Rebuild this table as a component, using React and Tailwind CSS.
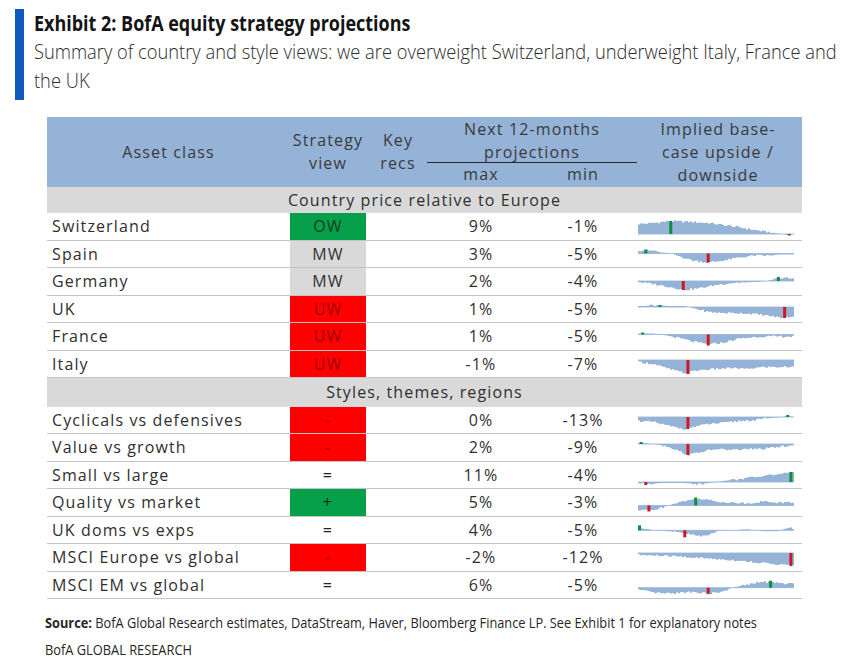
import React from "react";

const ROW_H = "h-[27.5px]";

// sparkline shapes: keypoints [t, v] (v > 0 above baseline), markers [t, v, colour]
const countries = [
  {
    name: "Switzerland", view: "OW", max: "9%", min: "-1%",
    base: 21,
    pts: [[0, 10], [0.1, 11], [0.2, 13], [0.35, 12], [0.45, 11], [0.6, 8], [0.75, 4], [0.88, 1], [0.93, 0], [0.95, -1], [1, 0]],
    marks: [[0.21, 13, "g"], [0.97, -1.5, "r"]],
  },
  {
    name: "Spain", view: "MW", max: "3%", min: "-5%",
    base: 12.5,
    pts: [[0, 3], [0.1, 3], [0.15, 1], [0.22, 0], [0.25, -2], [0.35, -7], [0.45, -9], [0.55, -7], [0.65, -4], [0.75, -2], [0.85, -2], [0.9, -1], [1, -1]],
    marks: [[0.05, 4, "g"], [0.45, -9, "r"]],
  },
  {
    name: "Germany", view: "MW", max: "2%", min: "-4%",
    base: 13,
    pts: [[0, -1], [0.1, -3], [0.2, -6], [0.3, -9], [0.4, -7], [0.5, -4], [0.6, -2], [0.75, -1], [0.83, 0], [0.88, 2], [0.95, 3], [1, 2]],
    marks: [[0.29, -9, "r"], [0.9, 4, "g"]],
  },
  {
    name: "UK", view: "UW", max: "1%", min: "-5%",
    base: 11,
    pts: [[0, 1], [0.05, 1], [0.1, 2], [0.2, 1], [0.3, 1], [0.35, -1], [0.45, -5], [0.55, -6], [0.65, -6], [0.75, -7], [0.85, -9], [0.93, -11], [1, -9]],
    marks: [[0.14, 2, "g"], [0.94, -11, "r"]],
  },
  {
    name: "France", view: "UW", max: "1%", min: "-5%",
    base: 11.5,
    pts: [[0, 1], [0.1, 1], [0.15, 0], [0.25, -3], [0.35, -7], [0.45, -10], [0.55, -8], [0.65, -4], [0.8, -2], [1, -2]],
    marks: [[0.03, 2, "g"], [0.45, -11, "r"]],
  },
  {
    name: "Italy", view: "UW", max: "-1%", min: "-7%",
    base: 9,
    pts: [[0, -2], [0.1, -4], [0.2, -9], [0.3, -13], [0.4, -10], [0.5, -9], [0.6, -8], [0.7, -9], [0.8, -7], [0.9, -7], [1, -7]],
    marks: [[0.32, -14, "r"]],
  },
];

const styles = [
  {
    name: "Cyclicals vs defensives", view: "-", max: "0%", min: "-13%",
    base: 10,
    pts: [[0, -4], [0.1, -5], [0.2, -9], [0.3, -12], [0.35, -10], [0.45, -7], [0.55, -6], [0.65, -4], [0.75, -3], [0.85, -1], [0.92, 0], [0.95, 1], [1, 0]],
    marks: [[0.32, -12, "r"], [0.96, 2, "g"]],
  },
  {
    name: "Value vs growth", view: "-", max: "2%", min: "-9%",
    base: 10,
    pts: [[0, 1], [0.05, 1], [0.1, 0], [0.18, -2], [0.25, -6], [0.32, -11], [0.4, -8], [0.5, -5], [0.6, -6], [0.7, -5], [0.8, -5], [0.9, -3], [1, -1]],
    marks: [[0.02, 2, "g"], [0.32, -11, "r"]],
  },
  {
    name: "Small vs large", view: "=", max: "11%", min: "-4%",
    base: 20,
    pts: [[0, -1], [0.05, -2], [0.15, -1], [0.3, -1], [0.4, -2], [0.45, -1], [0.5, 0], [0.6, 2], [0.7, 4], [0.8, 6], [0.9, 8], [1, 9]],
    marks: [[0.05, -3, "r"], [0.98, 10, "g"]],
  },
  {
    name: "Quality vs market", view: "+", max: "5%", min: "-3%",
    base: 16.5,
    pts: [[0, -5], [0.12, -4], [0.15, -2], [0.2, 0], [0.25, 3], [0.35, 6], [0.4, 7], [0.5, 4], [0.6, 3], [0.7, 2], [0.8, 4], [0.9, 3], [1, 3]],
    marks: [[0.07, -6, "r"], [0.37, 8, "g"]],
  },
  {
    name: "UK doms vs exps", view: "=", max: "4%", min: "-5%",
    base: 13.3,
    pts: [[0, 3], [0.04, 2], [0.1, 0], [0.2, -1], [0.3, -3], [0.4, -6], [0.45, -5], [0.5, -1], [0.6, 0], [0.7, 1], [0.8, -1], [0.9, -1], [0.95, 2], [1, 2]],
    marks: [[0.01, 5, "g"], [0.3, -7, "r"]],
  },
  {
    name: "MSCI Europe vs global", view: "-", max: "-2%", min: "-12%",
    base: 9,
    pts: [[0, -2], [0.2, -3], [0.4, -5], [0.6, -7], [0.8, -10], [0.95, -12], [1, -12]],
    marks: [[0.98, -13, "r"]],
  },
  {
    name: "MSCI EM vs global", view: "=", max: "6%", min: "-5%",
    base: 15.7,
    pts: [[0, -2], [0.1, -5], [0.2, -6], [0.35, -4], [0.45, -6], [0.55, -4], [0.6, 0], [0.7, 3], [0.8, 6], [0.88, 5], [0.95, 4], [1, 4]],
    marks: [[0.85, 7, "g"], [0.45, -6, "r"]],
  },
];

function interp(pts, t) {
  for (let i = 1; i < pts.length; i++) {
    if (t <= pts[i][0]) {
      const [t0, v0] = pts[i - 1];
      const [t1, v1] = pts[i];
      return v0 + ((v1 - v0) * (t - t0)) / (t1 - t0 || 1);
    }
  }
  return pts[pts.length - 1][1];
}

function Spark({ base, pts, marks, seed }) {
  const W = 156;
  const N = 78;
  const bw = W / N;
  let d = `M 0 ${base}`;
  for (let i = 0; i < N; i++) {
    const t = (i + 0.5) / N;
    let v = interp(pts, t);
    const r = Math.sin(i * 12.9898 + seed * 78.233) * 43758.5453;
    const f = r - Math.floor(r);
    if (Math.abs(v) > 1.5) v += (f - 0.5) * 1.8;
    const y = base - v;
    d += ` L ${(i * bw).toFixed(2)} ${y.toFixed(2)} L ${((i + 1) * bw).toFixed(2)} ${y.toFixed(2)}`;
  }
  d += ` L ${W} ${base} Z`;
  return (
    <svg width="160" height="27" viewBox="0 0 160 27" className="block ml-[4px]">
      <line x1="0" y1={base} x2={W} y2={base} stroke="#a9c0dd" strokeWidth="1" />
      <path d={d} fill="#95b3d7" />
      {marks.map(([t, v, c], i) => (
        <rect
          key={i}
          x={t * W - 1.5}
          y={v > 0 ? base - v : base}
          width="3"
          height={Math.abs(v)}
          fill={c === "g" ? "#0c8f3e" : "#d01820"}
        />
      ))}
    </svg>
  );
}

function ViewCell({ view }) {
  if (view === "OW") return <div className="w-[76px] h-full flex items-center justify-center bg-[#06a04a] text-[#123d20]">OW</div>;
  if (view === "MW") return <div className="w-[76px] h-full flex items-center justify-center bg-[#d9d9d9] text-[#333]">MW</div>;
  if (view === "UW") return <div className="w-[76px] h-full flex items-center justify-center bg-[#ff0000] text-[#9e0000]">UW</div>;
  if (view === "-") return <div className="w-[76px] h-full flex items-center justify-center bg-[#ff0000] text-[#a30000]">-</div>;
  if (view === "+") return <div className="w-[76px] h-full flex items-center justify-center bg-[#06a04a] text-[#0d2d14]">+</div>;
  return <div className="w-[76px] h-full flex items-center justify-center text-[#222]">=</div>;
}

function Row({ r, seed }) {
  return (
    <div className={`flex ${ROW_H} border-b border-[#c4c4c4] box-border`}>
      <div className="w-[243px] flex items-center pl-[5px]">{r.name}</div>
      <ViewCell view={r.view} />
      <div className="w-[64px]" />
      <div className="w-[102px] flex items-center justify-center">{r.max}</div>
      <div className="w-[102px] flex items-center justify-center">{r.min}</div>
      <div className="w-[168px] overflow-hidden">
        <Spark base={r.base} pts={r.pts} marks={r.marks} seed={seed} />
      </div>
    </div>
  );
}

export default function App() {
  return (
    <div className="w-[850px] h-[660px] bg-white overflow-hidden font-['Open_Sans',sans-serif]">
      {/* heading */}
      <div className="flex pt-[9px] pl-[15px]">
        <div className="w-[9px] h-[91px] shrink-0 bg-[#1159c0]" />
        <div className="pl-[10px] pt-[1px]">
          <div className="h-[27px] leading-[27px] text-[21px] font-bold text-[#141414] whitespace-nowrap">
            <span className="inline-block origin-left scale-x-[0.855]">Exhibit 2: BofA equity strategy projections</span>
          </div>
          <div className="leading-[29px] text-[20px] font-light text-[#2c2c2c] whitespace-nowrap">
            <span className="inline-block origin-left scale-x-[0.915]">
              Summary of country and style views: we are overweight Switzerland, underweight Italy, France and
            </span>
            <br />
            <span className="inline-block origin-left scale-x-[0.915]">the UK</span>
          </div>
        </div>
      </div>

      {/* table */}
      <div className="ml-[47px] mt-[17px] w-[755px] text-[16px] tracking-[0.07em] text-[#2f2f2f]">
        <div className="flex h-[70px] bg-[#95b3d7] text-[#3a3a3a] leading-[23px]">
          <div className="w-[243px] flex items-center justify-center">Asset class</div>
          <div className="w-[76px] flex flex-col items-center justify-center">
            <span>Strategy</span>
            <span>view</span>
          </div>
          <div className="w-[64px] flex flex-col items-center justify-center">
            <span>Key</span>
            <span>recs</span>
          </div>
          <div className="w-[204px] flex flex-col pt-[1px]">
            <div className="text-center">Next 12-months</div>
            <div className="text-center h-[22px] border-b-[1.5px] border-[#2a2a2a] mx-[-3px]">projections</div>
            <div className="flex">
              <div className="w-[102px] text-center">max</div>
              <div className="w-[102px] text-center">min</div>
            </div>
          </div>
          <div className="w-[168px] flex flex-col items-center pt-[1px]">
            <span>Implied base-</span>
            <span>case upside /</span>
            <span>downside</span>
          </div>
        </div>

        <div className="h-[26px] bg-[#d9d9d9] flex items-center justify-center">Country price relative to Europe</div>
        {countries.map((r, i) => (
          <Row key={r.name} r={r} seed={i + 1} />
        ))}
        <div className="h-[28.5px] bg-[#d9d9d9] flex items-center justify-center">Styles, themes, regions</div>
        {styles.map((r, i) => (
          <Row key={r.name} r={r} seed={i + 11} />
        ))}
      </div>

      {/* footer */}
      <div className="pl-[45px] mt-[10px] text-[15px] text-[#262626] leading-[27px] whitespace-nowrap">
        <div>
          <span className="inline-block origin-left scale-x-[0.852]">
            <b className="font-bold">Source:</b> BofA Global Research estimates, DataStream, Haver, Bloomberg Finance LP. See Exhibit 1 for explanatory notes
          </span>
        </div>
        <div>
          <span className="inline-block origin-left scale-x-[0.855]">BofA GLOBAL RESEARCH</span>
        </div>
      </div>
    </div>
  );
}
